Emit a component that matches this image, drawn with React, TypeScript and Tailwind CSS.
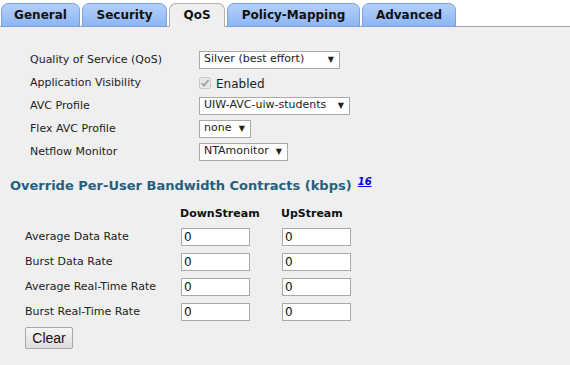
import React from 'react';

const tabs = [
  { name: 'General', w: 'w-[79px]' },
  { name: 'Security', w: 'w-[85px]' },
  { name: 'QoS', w: 'w-[56px]', active: true },
  { name: 'Policy-Mapping', w: 'w-[133px]' },
  { name: 'Advanced', w: 'w-[94px]' },
];

const Select = ({ value, width }: { value: string; width: string }) => (
  <div className={`${width} h-[18px] bg-white border border-[#a9a9a9] flex items-center justify-between pl-[4px] pr-[5px] text-[11px] text-[#222]`}>
    <span>{value}</span>
    <span className="text-[8px] leading-none">▼</span>
  </div>
);

const NumBox = () => (
  <div className="w-[69px] h-[18px] bg-white border border-[#a9a9a9] flex items-center pl-[2px] text-[12px] text-[#111]">0</div>
);

export default function App() {
  const formRows: { label: string; field: React.ReactNode }[] = [
    { label: 'Quality of Service (QoS)', field: <Select value="Silver (best effort)" width="w-[141px]" /> },
    {
      label: 'Application Visibility',
      field: (
        <div className="flex items-center gap-[5px] text-[12px] text-[#222]">
          <div className="w-[12px] h-[12px] border border-[#c8c8c8] bg-[#e8e8e8] rounded-[2px] flex items-center justify-center">
            <svg width="10" height="10" viewBox="0 0 10 10">
              <path d="M1.5 5.2 L4 7.6 L8.6 2" fill="none" stroke="#a0a0a0" strokeWidth="1.8" />
            </svg>
          </div>
          <span className="mt-[2px]">Enabled</span>
        </div>
      ),
    },
    { label: 'AVC Profile', field: <Select value="UIW-AVC-uiw-students" width="w-[151px]" /> },
    { label: 'Flex AVC Profile', field: <Select value="none" width="w-[52px]" /> },
    { label: 'Netflow Monitor', field: <Select value="NTAmonitor" width="w-[89px]" /> },
  ];

  const rates = ['Average Data Rate', 'Burst Data Rate', 'Average Real-Time Rate', 'Burst Real-Time Rate'];

  return (
    <div className="w-[570px] h-[365px] bg-white font-['DejaVu_Sans',Verdana,sans-serif] overflow-hidden">
      {/* tab strip */}
      <div className="h-[27px] flex items-end gap-[2px] pl-[1px] border-b border-[#a0a0a0]">
        {tabs.map(t => (
          <div
            key={t.name}
            className={`${t.w} h-[24px] -mb-px rounded-t-[7px] border flex items-center justify-center text-[12px] font-bold text-[#111] ${
              t.active
                ? 'bg-[#efefef] border-[#b0b0b0] border-b-[#efefef]'
                : 'bg-gradient-to-b from-[#b5d0fa] to-[#8db5f2] border-[#79a2e4]'
            }`}
          >
            {t.name}
          </div>
        ))}
      </div>

      <div className="bg-[#efefef] h-[338px]">
        {/* QoS settings */}
        <div className="pt-[21px] pl-[30px]">
          {formRows.map(r => (
            <div key={r.label} className="h-[23px] flex items-center">
              <div className="w-[169px] text-[11px] text-[#222] mt-[1px]">{r.label}</div>
              {r.field}
            </div>
          ))}
        </div>

        {/* Bandwidth contracts */}
        <div className="mt-[14px] pl-[10px] h-[18px] flex items-center">
          <span className="text-[13px] font-bold text-[#25607e]">Override Per-User Bandwidth Contracts (kbps)</span>
          <a className="ml-[6px] -mt-[10px] text-[10px] italic font-bold text-[#0000ee] underline">16</a>
        </div>

        <div className="pl-[25px] mt-[9px]">
          <div className="h-[20px] flex items-center text-[11px] font-bold text-[#111]">
            <div className="w-[155px]" />
            <div className="w-[101px]">DownStream</div>
            <div>UpStream</div>
          </div>
          {rates.map(r => (
            <div key={r} className="h-[25px] flex items-center">
              <div className="w-[156px] text-[11px] text-[#222] mt-[2px]">{r}</div>
              <NumBox />
              <div className="ml-[32px]">
                <NumBox />
              </div>
            </div>
          ))}
          <button className="mt-[3px] w-[48px] h-[22px] border border-[#a8a8a8] rounded-[2px] bg-gradient-to-b from-[#f6f6f6] to-[#dedede] text-[14px] font-['Liberation_Sans',Arial,sans-serif] text-[#111]">
            Clear
          </button>
        </div>
      </div>
    </div>
  );
}
